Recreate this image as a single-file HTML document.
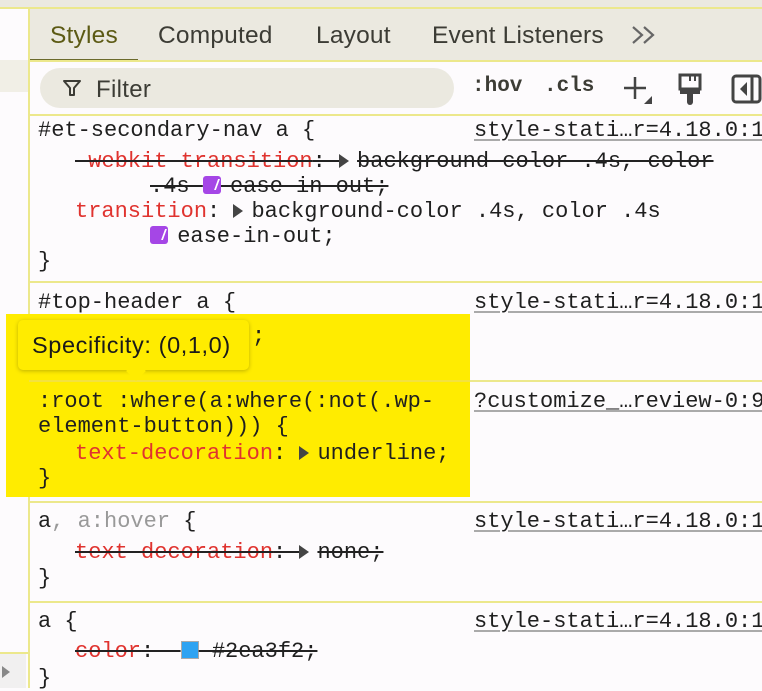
<!DOCTYPE html>
<html><head><meta charset="utf-8"><style>
*{margin:0;padding:0;box-sizing:border-box}
body{width:762px;height:688px;overflow:hidden;background:#fdfbfd;position:relative;font-family:"Liberation Sans",sans-serif}
.a{position:absolute}
.m{position:absolute;font-family:"Liberation Mono",monospace;font-size:22px;line-height:25px;color:#1f1f1f;white-space:pre;margin-top:2px}
.r{color:#e0332f}
.s{text-decoration:line-through;text-decoration-color:#222;text-decoration-thickness:2px}
.lk{position:absolute;left:474px;font-family:"Liberation Mono",monospace;font-size:22px;line-height:25px;color:#1f1f1f;white-space:pre;text-decoration:underline;text-decoration-color:#aaa;text-underline-offset:3px;margin-top:2px}
.tri{display:inline-block;width:0;height:0;border-left:10px solid #444;border-top:7px solid transparent;border-bottom:7px solid transparent;vertical-align:-1px;margin:0 8px 0 0}
.ez{display:inline-block;width:18px;height:18px;background:#a546e6;border-radius:3px;vertical-align:-2px;position:relative;margin-right:-4px}
.ez:after{content:"";position:absolute;left:4px;top:3px;width:9px;height:11px;border-right:2.5px solid #fff;border-radius:0 0 0 8px;transform:skewX(-20deg)}
.sep{position:absolute;left:29px;right:0;height:2px;background:#ece88c}
.tab{position:absolute;top:22px;font-size:24.5px;color:#3c3c35;letter-spacing:0.2px}
</style></head><body>
<div class="a" style="left:0;top:0;width:762px;height:8px;background:#ebe9e0"></div>
<div class="a" style="left:0;top:7px;width:762px;height:2px;background:#ece88c"></div>
<div class="a" style="left:0;top:60px;width:28px;height:32px;background:#f1efe6"></div>
<div class="a" style="left:28px;top:8px;width:2px;height:680px;background:#ece88c"></div>
<div class="a" style="left:0;top:652px;width:28px;height:2px;background:#ece88c"></div>
<div class="a" style="left:0;top:654px;width:26px;height:34px;background:#f1f0f0"></div>
<div class="a" style="left:2px;top:666px;border-left:8px solid #888;border-top:6px solid transparent;border-bottom:6px solid transparent"></div>
<div class="a" style="left:30px;top:9px;width:732px;height:52px;background:#ebe9e0"></div>
<div class="tab" style="left:50px;color:#5c5a14">Styles</div>
<div class="a" style="left:30px;top:59px;width:108px;height:3px;background:#6b6a2c"></div>
<div class="tab" style="left:158px">Computed</div>
<div class="tab" style="left:316px">Layout</div>
<div class="tab" style="left:432px">Event Listeners</div>
<svg class="a" style="left:631px;top:25px" width="26" height="20" viewBox="0 0 26 20"><path d="M2 2l9 8-9 8M13 2l9 8-9 8" fill="none" stroke="#666" stroke-width="2.2"/></svg>
<div class="sep" style="top:60px"></div>
<div class="a" style="left:40px;top:68px;width:414px;height:40px;border-radius:20px;background:#ebe9e0"></div>
<svg class="a" style="left:62px;top:78px" width="20" height="20" viewBox="0 0 20 20"><path d="M2 3h16l-6 7v7h-4v-7z" fill="none" stroke="#3c3c35" stroke-width="2" stroke-linejoin="round"/></svg>
<div class="a" style="left:96px;top:76px;font-size:24px;color:#3c3c35;letter-spacing:0.3px">Filter</div>
<div class="a" style="left:472px;top:75px;font-family:'Liberation Mono',monospace;font-weight:bold;font-size:21px;color:#3c3c35">:hov</div>
<div class="a" style="left:544px;top:75px;font-family:'Liberation Mono',monospace;font-weight:bold;font-size:21px;color:#3c3c35">.cls</div>
<svg class="a" style="left:620px;top:74px" width="36" height="32" viewBox="0 0 36 32"><path d="M4 14h22M15 3v22" stroke="#444" stroke-width="2.5"/><path d="M24 30l8-8v8z" fill="#444"/></svg>
<svg class="a" style="left:677px;top:72px" width="26" height="34" viewBox="0 0 26 34"><path d="M3 3h20v14H3z" fill="none" stroke="#444" stroke-width="3"/><path d="M3 17h20v5H3z" fill="#444"/><path d="M10 22h6v8a3 3 0 0 1-6 0z" fill="#444"/><path d="M13 3v6M18 3v6" stroke="#444" stroke-width="2"/></svg>
<svg class="a" style="left:731px;top:74px" width="31" height="30" viewBox="0 0 31 30"><rect x="2" y="2" width="27" height="26" rx="3" fill="none" stroke="#444" stroke-width="3"/><path d="M21 2v26" stroke="#444" stroke-width="3"/><path d="M16 8v14l-7-7z" fill="#444"/></svg>
<div class="sep" style="top:114px"></div>

<div class="m" style="left:38px;top:116px">#et-secondary-nav a {</div>
<div class="lk" style="top:116px">style-stati…r=4.18.0:1</div>
<div class="m s" style="left:75px;top:147px"><span class="r">-webkit-transition</span>: <span class="tri"></span>background-color .4s, color</div>
<div class="m s" style="left:150px;top:172px">.4s <span class="ez"></span> ease-in-out;</div>
<div class="m" style="left:75px;top:197px"><span class="r">transition</span>: <span class="tri"></span>background-color .4s, color .4s</div>
<div class="m" style="left:150px;top:222px"><span class="ez"></span> ease-in-out;</div>
<div class="m" style="left:38px;top:247px">}</div>
<div class="sep" style="top:281px"></div>

<div class="m" style="left:38px;top:288px">#top-header a {</div>
<div class="lk" style="top:288px">style-stati…r=4.18.0:1</div>

<div class="a" style="left:6px;top:314px;width:464px;height:183px;background:#ffec00"></div>
<div class="sep" style="top:380px;left:29px;width:441px;background:#f3e240"></div>
<div class="sep" style="top:380px;left:470px"></div>
<div class="m" style="left:252px;top:322px">;</div>
<div class="a" style="left:18px;top:320px;width:231px;height:50px;background:#ffec00;border-radius:5px;box-shadow:0 1px 4px rgba(0,0,0,.25)"></div>
<div class="a" style="left:129px;top:364px;width:14px;height:14px;background:#ffec00;transform:rotate(45deg)"></div>
<div class="a" style="left:32px;top:332px;font-size:23.5px;color:#1a1a1a;letter-spacing:0.6px">Specificity: (0,1,0)</div>
<div class="m" style="left:38px;top:387px">:root :where(a:where(:not(.wp-</div>
<div class="m" style="left:38px;top:412px">element-button))) {</div>
<div class="lk" style="top:387px">?customize_…review-0:9</div>
<div class="m" style="left:75px;top:439px"><span class="r">text-decoration</span>: <span class="tri"></span>underline;</div>
<div class="m" style="left:38px;top:464px">}</div>
<div class="sep" style="top:501px"></div>

<div class="m" style="left:38px;top:507px">a<span style="color:#999">, a:hover</span> {</div>
<div class="lk" style="top:507px">style-stati…r=4.18.0:1</div>
<div class="m s" style="left:75px;top:538px"><span class="r">text-decoration</span>: <span class="tri"></span>none;</div>
<div class="m" style="left:38px;top:564px">}</div>
<div class="sep" style="top:601px"></div>

<div class="m" style="left:38px;top:607px">a {</div>
<div class="lk" style="top:607px">style-stati…r=4.18.0:1</div>
<div class="m s" style="left:75px;top:637px"><span class="r">color</span>:  <span style="display:inline-block;width:18px;height:18px;background:#2ea3f2;border:1px solid #aaa;vertical-align:-2px;text-decoration:none"></span> #2ea3f2;</div>
<div class="m" style="left:38px;top:664px">}</div>
</body></html>
